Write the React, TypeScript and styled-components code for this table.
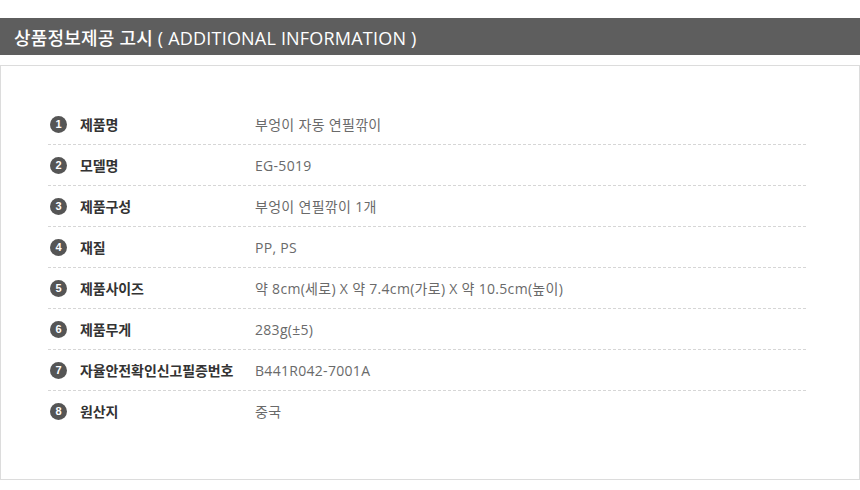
import styled, { createGlobalStyle } from 'styled-components'

const GlobalStyle = createGlobalStyle`
  html, body {
    margin: 0;
    padding: 0;
    background: #fff;
  }
  body {
    font-family: "Open Sans", "Noto Sans CJK KR", sans-serif;
  }
`

const Page = styled.div`
  width: 860px;
  padding-top: 18px;
`

const TitleBar = styled.h2`
  margin: 0;
  height: 37px;
  display: flex;
  align-items: center;
  padding-left: 14px;
  background: #5e5e5e;
  color: #fff;
  font-size: 18px;
  font-weight: 500;
  letter-spacing: 0.2px;
  white-space: pre;
`

const InfoBox = styled.div`
  margin-top: 10px;
  height: 415px;
  box-sizing: border-box;
  border: 1px solid #dcdcdc;
  padding: 38px 53px 0 47px;
`

const Row = styled.div<{ $last?: boolean }>`
  display: flex;
  align-items: center;
  height: 40px;
  border-bottom: ${(p) => (p.$last ? 'none' : '1px dashed #d6d6d6')};
`

const Badge = styled.span`
  width: 17px;
  height: 17px;
  margin-left: 2px;
  border-radius: 50%;
  background: #555;
  color: #fff;
  font-family: "Liberation Sans", Arial, sans-serif;
  font-size: 11px;
  font-weight: 700;
  display: flex;
  align-items: center;
  justify-content: center;
  flex-shrink: 0;
`

const Label = styled.span`
  width: 175px;
  margin-left: 13px;
  font-family: "Noto Sans CJK KR", sans-serif;
  font-size: 14px;
  font-weight: 700;
  color: #333;
  letter-spacing: -0.1px;
`

const Value = styled.span`
  font-size: 14px;
  color: #6a6a6a;
  letter-spacing: 0.3px;
`

const rows: [string, string][] = [
  ['제품명', '부엉이 자동 연필깎이'],
  ['모델명', 'EG-5019'],
  ['제품구성', '부엉이 연필깎이 1개'],
  ['재질', 'PP, PS'],
  ['제품사이즈', '약 8cm(세로) X 약 7.4cm(가로) X 약 10.5cm(높이)'],
  ['제품무게', '283g(±5)'],
  ['자율안전확인신고필증번호', 'B441R042-7001A'],
  ['원산지', '중국'],
]

export default function App() {
  return (
    <Page>
      <GlobalStyle />
      <TitleBar>상품정보제공 고시 ( ADDITIONAL INFORMATION )</TitleBar>
      <InfoBox>
        {rows.map(([label, value], i) => (
          <Row key={label} $last={i === rows.length - 1}>
            <Badge>{i + 1}</Badge>
            <Label>{label}</Label>
            <Value>{value}</Value>
          </Row>
        ))}
      </InfoBox>
    </Page>
  )
}
